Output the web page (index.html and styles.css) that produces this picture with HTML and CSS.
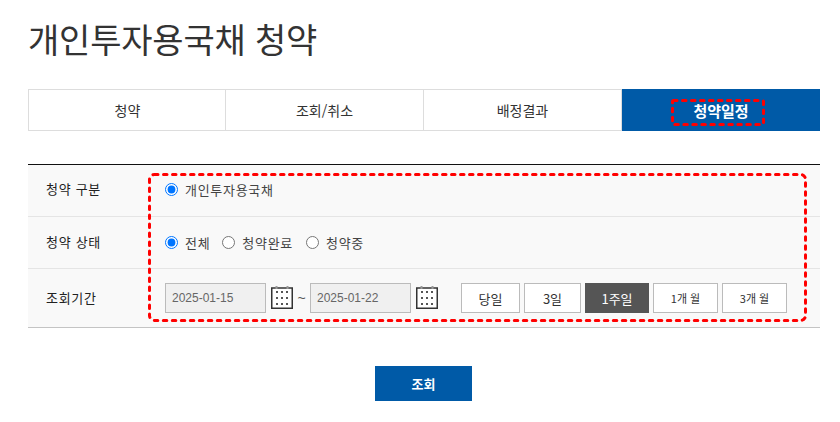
FILE: index.html
```html
<!DOCTYPE html>
<html lang="ko">
<head>
    <meta charset="UTF-8">
    <meta name="viewport" content="width=device-width, initial-scale=1.0">
    <title>개인투자용국채 청약</title>
    <link rel="stylesheet" href="styles.css">
</head>
<body>
    <div class="wrap">
        <h1>개인투자용국채 청약</h1>

        <ul class="tabs">
            <li class="first">청약</li>
            <li>조회/취소</li>
            <li>배정결과</li>
            <li class="on">청약일정
                <svg class="mark" width="94" height="27"><rect x="1.5" y="1.5" width="91" height="24" rx="1"/></svg>
            </li>
        </ul>

        <div class="search">
            <div class="row row-first">
                <div class="label">청약 구분</div>
                <div class="field">
                    <label class="radio"><input type="radio" name="kind" checked>개인투자용국채</label>
                </div>
            </div>
            <div class="row">
                <div class="label">청약 상태</div>
                <div class="field">
                    <label class="radio"><input type="radio" name="state" checked>전체</label>
                    <label class="radio"><input type="radio" name="state">청약완료</label>
                    <label class="radio"><input type="radio" name="state">청약중</label>
                </div>
            </div>
            <div class="row row-last">
                <div class="label">조회기간</div>
                <div class="field">
                    <input class="date" type="text" value="2025-01-15" readonly>
                    <svg class="cal" width="22" height="24" viewBox="0 0 22 24">
                        <use href="#calendar"/>
                    </svg>
                    <span class="tilde">~</span>
                    <input class="date" type="text" value="2025-01-22" readonly>
                    <svg class="cal" width="22" height="24" viewBox="0 0 22 24">
                        <use href="#calendar"/>
                    </svg>
                    <div class="periods">
                        <button type="button" class="w59">당일</button>
                        <button type="button" class="w57">3일</button>
                        <button type="button" class="w64 on">1주일</button>
                        <button type="button" class="w65">1개 월</button>
                        <button type="button" class="w65">3개 월</button>
                    </div>
                </div>
            </div>
            <svg class="mark" width="659" height="149"><rect x="1.5" y="1.5" width="656" height="146" rx="5"/></svg>
        </div>

        <div class="actions">
            <button type="button" class="submit">조회</button>
        </div>
    </div>

    <svg width="0" height="0" class="defs">
        <defs>
            <g id="calendar">
                <rect x="0.75" y="2" width="20.500" height="20.250" fill="#fff" stroke="#333" stroke-width="1.5"/>
                <path d="M5.500 0V3M16.500 0V3" stroke="#999" stroke-width="2"/>
                <path d="M5 5h2v2H5zM10 5h2v2h-2zM15 5h2v2h-2zM5 11h2v2H5zM10 11h2v2h-2zM15 11h2v2h-2zM5 17h2v2H5zM10 17h2v2h-2zM15 17h2v2h-2z" fill="#555"/>
            </g>
        </defs>
    </svg>
</body>
</html>
```

FILE: styles.css
```css
* {
    box-sizing: border-box;
}
body {
    margin: 0;
    background-color: #fff;
    font-family: "Noto Sans CJK KR", "Noto Sans", sans-serif;
    color: #333;
}
.wrap {
    margin: 0 20px 0 28px;
}
h1 {
    margin: 0;
    padding-top: 16px;
    height: 89px;
    font-size: 34px;
    line-height: 46px;
    font-weight: 400;
    letter-spacing: -0.2px;
    color: #333;
}
.tabs {
    display: grid;
    grid-template-columns: 197px 198px 198px 198px;
    margin: 0;
    padding: 0;
    height: 42px;
    list-style: none;
    border-top: 1px solid #ddd;
    border-bottom: 1px solid #ddd;
    border-left: 1px solid #ddd;
}
.tabs li {
    position: relative;
    display: flex;
    align-items: center;
    justify-content: center;
    border-right: 1px solid #ddd;
    font-size: 14px;
}
.tabs li.first {
    padding-left: 1px;
}
.tabs li.on {
    margin: -1px 0;
    border: 0;
    background-color: #005aa7;
    color: #fff;
    font-size: 15px;
    font-weight: 700;
}
.mark {
    position: absolute;
    fill: none;
    stroke: #f00;
    stroke-width: 3;
    stroke-linecap: round;
    stroke-dasharray: 3.5 5.5;
}
.tabs .mark {
    left: 49px;
    top: 10px;
}
.search {
    position: relative;
    margin-top: 33px;
    border-top: 1px solid #111;
    border-bottom: 1px solid #c4c4c4;
    background-color: #f9f9f9;
}
.search > .mark {
    left: 120px;
    top: 8px;
}
.row {
    display: flex;
    align-items: center;
    height: 52px;
    border-bottom: 1px solid #e5e5e5;
}
.row-first {
    padding-bottom: 2px;
}
.row-last {
    height: 58px;
    border-bottom: 0;
}
.label {
    width: 137px;
    padding-left: 18px;
    padding-bottom: 2px;
    font-size: 13px;
    letter-spacing: 0.7px;
    color: #222;
}
.field {
    flex: 1;
    display: flex;
    align-items: center;
}
.radio {
    display: flex;
    align-items: center;
    margin-right: 12px;
    font-size: 13px;
    letter-spacing: 0.7px;
    color: #444;
}
.radio + .radio + .radio {
    margin-left: 1px;
}
.radio input {
    margin: 0 7px 0 0;
    width: 13px;
    height: 13px;
}
.date {
    width: 101px;
    height: 30px;
    padding: 0 6px;
    border: 1px solid #bbb;
    background-color: #f0f0f0;
    font-family: "Liberation Sans", sans-serif;
    font-size: 12px;
    color: #666;
}
.cal {
    margin-left: 5px;
    flex: none;
}
.tilde {
    width: 17px;
    text-align: center;
    font-family: "Liberation Sans", sans-serif;
    font-size: 14px;
    color: #555;
}
.periods {
    display: flex;
    gap: 4px;
    margin-left: 23px;
}
.periods button {
    height: 30px;
    padding: 0;
    border: 1px solid #bbb;
    background-color: #fff;
    font-family: inherit;
    font-size: 13px;
    color: #333;
}
.periods button.on {
    border-color: #555;
    background-color: #555;
    color: #fff;
}
.w59 {
    width: 59px;
}
.w57 {
    width: 57px;
}
.w64 {
    width: 64px;
}
.periods .w65 {
    width: 65px;
    font-size: 11px;
}
.actions {
    display: flex;
    justify-content: center;
    margin-top: 38px;
    padding-right: 1px;
}
.submit {
    width: 97px;
    height: 35px;
    border: 0;
    background-color: #005aa7;
    font-family: inherit;
    font-size: 13px;
    font-weight: 700;
    color: #fff;
}
.defs {
    position: absolute;
}
```
